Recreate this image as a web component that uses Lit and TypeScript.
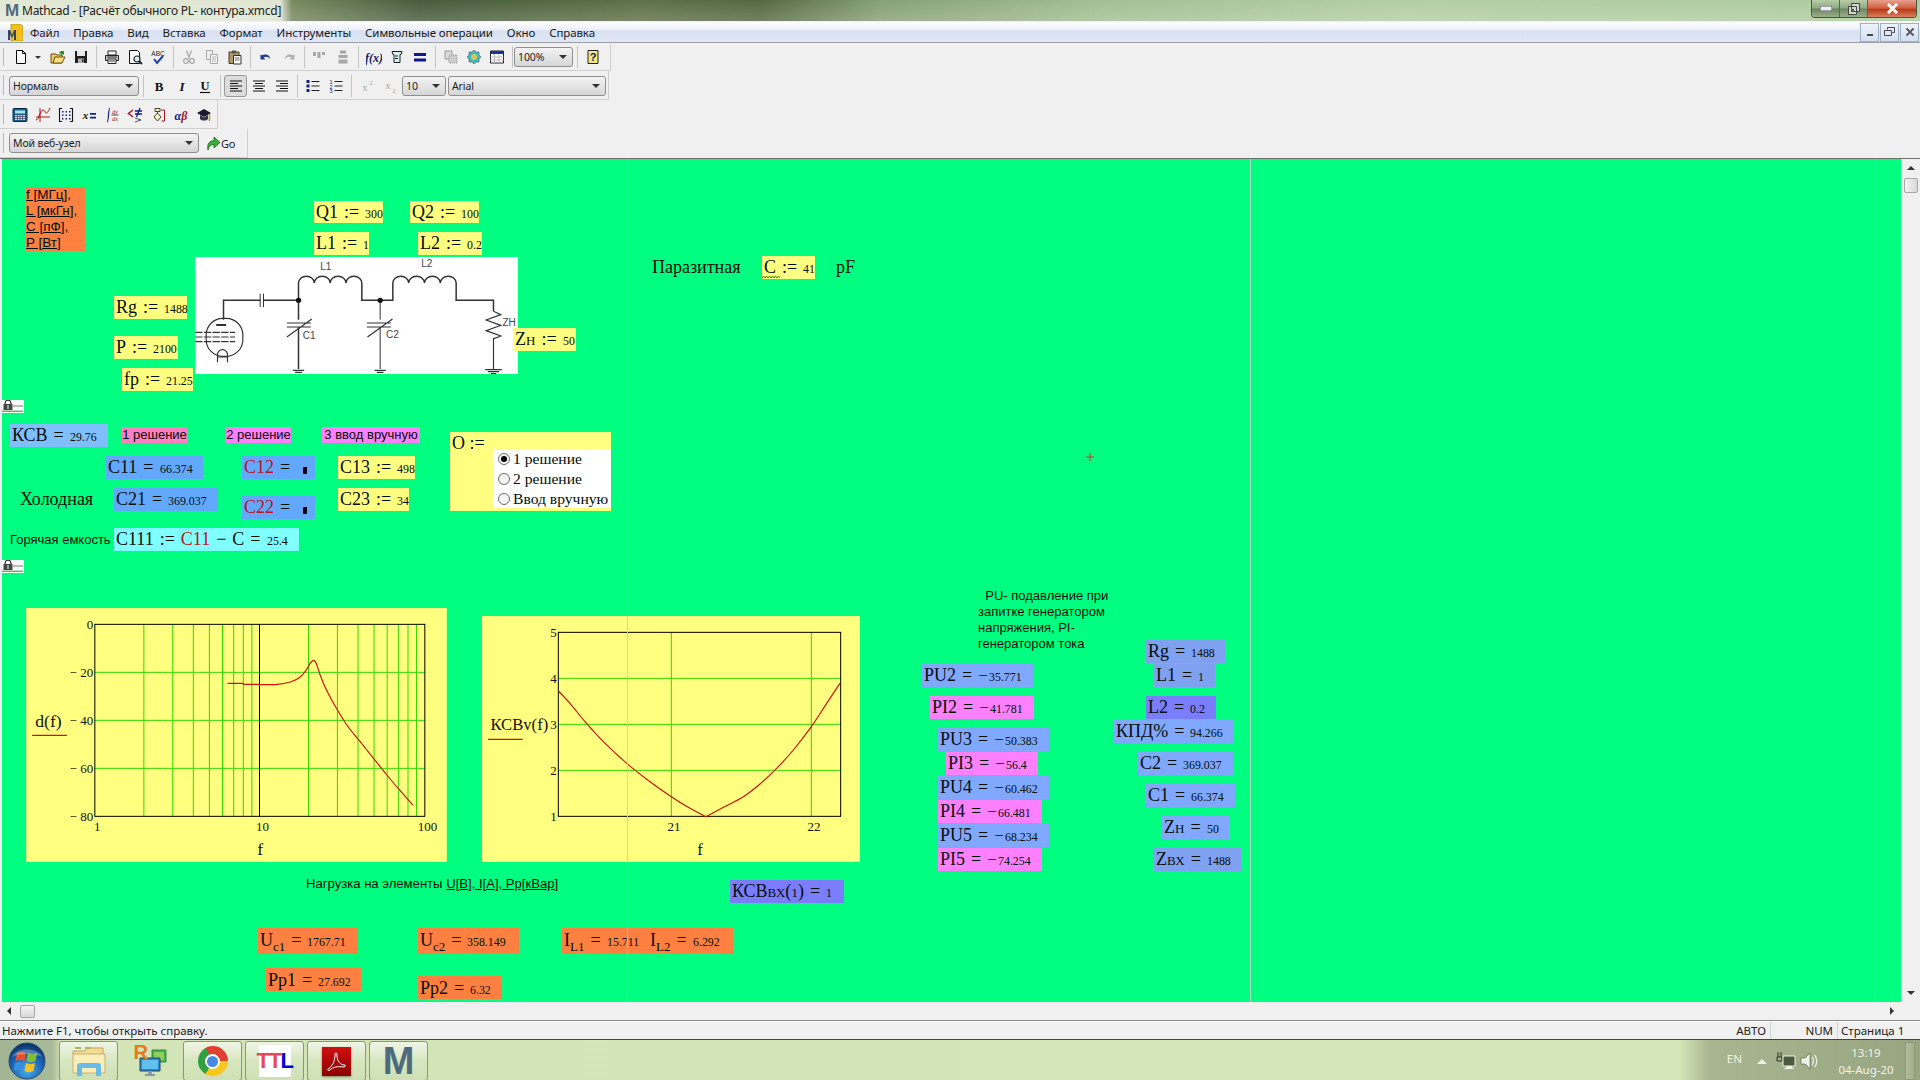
import { LitElement, html, css, svg, TemplateResult } from "lit";
import { customElement } from "lit/decorators.js";

type Btn = { k: string; w?: number; off?: boolean };

const I: Record<string, any> = {
  newdoc: svg`<path d="M3.5 1.5h6l3 3v10h-9z" fill="#fff" stroke="#000"/><path d="M9.5 1.5v3h3" fill="none" stroke="#000"/>`,
  open: svg`<path d="M1 5h5l1 1h5v8H1z" fill="#e8c860" stroke="#705010"/><path d="M3 14l2-6h10l-3 6z" fill="#f8e080" stroke="#705010"/><path d="M9 4c1-2 3-2.500 4-1.500l1-1v4h-4l1-1c-.5-.5-1.500-.5-2-.5z" fill="#209020"/>`,
  save: svg`<path d="M2 2h12v12H2z" fill="#202020"/><path d="M4 2h8v5H4z" fill="#e8e8e8"/><path d="M5 9.500h6V14H5z" fill="#b0b0b0"/><path d="M9 10.500h1.500V13H9z" fill="#222"/>`,
  print: svg`<path d="M4 2h8v4H4z" fill="#fff" stroke="#222"/><path d="M1.500 6.500h13v5h-13z" fill="#c8c8c8" stroke="#222"/><path d="M4 10h8v4.500H4z" fill="#fff" stroke="#222"/><path d="M5 12h6M3 8h10" stroke="#333"/>`,
  preview: svg`<path d="M2.500 1.500h8l2 2v11h-10z" fill="#fff" stroke="#111"/><circle cx="10" cy="10" r="3" fill="#d8f0ff" stroke="#222" stroke-width="1.200"/><path d="M12 12l3 3" stroke="#222" stroke-width="1.800"/>`,
  spell: svg`<text x="8" y="7" font-size="6.500" font-family="Liberation Sans" text-anchor="middle" fill="#222">ABC</text><path d="M4 10l3 4 6-7" fill="none" stroke="#1840b0" stroke-width="2"/>`,
  cut: svg`<path d="M5.500 1.500l3 8M10.500 1.500l-3 8" stroke="#a8a8a8" stroke-width="1.200"/><circle cx="5" cy="12" r="2.300" fill="none" stroke="#a8a8a8" stroke-width="1.200"/><circle cx="11" cy="12" r="2.300" fill="none" stroke="#a8a8a8" stroke-width="1.200"/>`,
  copy: svg`<path d="M2.500 1.500h6v9h-6z" fill="#eee" stroke="#a8a8a8"/><path d="M6.500 5.500h7v9h-7z" fill="#f4f4f4" stroke="#a8a8a8"/><path d="M8 8h4M8 10h4M8 12h4" stroke="#b8b8b8"/>`,
  paste: svg`<path d="M2 3h10v11.500H2z" fill="#b09868" stroke="#4a3a20"/><path d="M5 1.500h4v3H5z" fill="#555"/><path d="M6.500 6.500h7.500v8.500H6.500z" fill="#fff" stroke="#333"/><path d="M8 9h4.500M8 11h4.500" stroke="#666"/>`,
  undo: svg`<path d="M2.500 5.500v5h5l-2-2c2-1.500 5-1 6.500 1.500 .2-3-3-6-8-3.800z" fill="#1c3c90"/>`,
  redo: svg`<path d="M13.500 5.500v5h-5l2-2c-2-1.500-5-1-6.500 1.500-.2-3 3-6 8-3.800z" fill="#b0b0b0"/>`,
  ahoriz: svg`<path d="M1 3h3v4H1zM5.500 3h3v6h-3zM10 3h3v3h-3z" fill="#a8a8a8"/>`,
  avert: svg`<path d="M5 1.500h6v3H5zM3.500 6h9v3h-9zM3.500 10.500h9v4h-9z" fill="#a8a8a8"/>`,
  fx: svg`<text x="8" y="12.500" font-size="12" font-family="Liberation Serif" font-weight="700" font-style="italic" text-anchor="middle" fill="#102060">f(x)</text>`,
  unit: svg`<path d="M3 2.500h10l-1 3h-1v8H5v-8H4z" fill="#e0f0f0" stroke="#123"/><path d="M6 7h3M6 9.500h3" stroke="#123"/>`,
  eq: svg`<path d="M2 4h12v3H2zM2 9.500h12v3H2z" fill="#101890"/>`,
  comp1: svg`<path d="M2 2h7v8H2z" fill="#ddd" stroke="#999"/><path d="M6 6h8v8H6z" fill="#ccc" stroke="#999" stroke-dasharray="1 1"/>`,
  comp2: svg`<path d="M8 1l2 2 3 0 0 3 2 2-2 2 0 3-3 0-2 2-2-2-3 0 0-3-2-2 2-2 0-3 3 0z" fill="#40b8c8" stroke="#506060" stroke-width=".6"/><circle cx="8" cy="8" r="3" fill="#d8c850"/>`,
  table: svg`<path d="M1.500 2h13v12h-13z" fill="#fff" stroke="#223"/><path d="M1.500 2h13v3h-13z" fill="#20308c"/><path d="M5.500 5v9M10 5v9M1.500 8h13M1.500 11h13" stroke="#bbb"/>`,
  help: svg`<path d="M3 1.500h10v13H3z" fill="#f4e880" stroke="#222"/><text x="8" y="12" font-size="11" font-weight="700" font-family="Liberation Sans" text-anchor="middle" fill="#102060">?</text>`,
  bold: svg`<text x="8" y="13" font-size="13" font-weight="700" font-family="Liberation Serif" text-anchor="middle" fill="#111">B</text>`,
  ital: svg`<text x="8" y="13" font-size="13" font-weight="700" font-style="italic" font-family="Liberation Serif" text-anchor="middle" fill="#111">I</text>`,
  under: svg`<text x="8" y="12" font-size="12.500" font-weight="700" font-family="Liberation Serif" text-anchor="middle" fill="#111">U</text><path d="M3 14.500h10" stroke="#111" stroke-width="1.200"/>`,
  left: svg`<path d="M2 3h12M2 5.500h8M2 8h12M2 10.500h8M2 13h12" stroke="#111"/>`,
  center: svg`<path d="M2 3h12M4 5.500h8M2 8h12M4 10.500h8M2 13h12" stroke="#111"/>`,
  right: svg`<path d="M2 3h12M6 5.500h8M2 8h12M6 10.500h8M2 13h12" stroke="#111"/>`,
  bullets: svg`<path d="M1.500 2h3v3h-3zM1.500 6.500h3v3h-3zM1.500 11h3v3h-3z" fill="#10208c"/><path d="M6.500 3.500h8M6.500 8h8M6.500 12.500h8" stroke="#222"/>`,
  numbers: svg`<text x="3" y="5.500" font-size="5.500" font-family="Liberation Sans" text-anchor="middle" fill="#10208c">1</text><text x="3" y="10.500" font-size="5.500" font-family="Liberation Sans" text-anchor="middle" fill="#10208c">2</text><text x="3" y="15" font-size="5.500" font-family="Liberation Sans" text-anchor="middle" fill="#10208c">3</text><path d="M6.500 3.500h8M6.500 8h8M6.500 12.500h8" stroke="#222"/>`,
  sup: svg`<text x="6" y="13" font-size="10" font-family="Liberation Serif" text-anchor="middle" fill="#a8a8a8">x</text><text x="12" y="7" font-size="7" font-family="Liberation Serif" text-anchor="middle" fill="#a8a8a8">2</text>`,
  sub: svg`<text x="6" y="11" font-size="10" font-family="Liberation Serif" text-anchor="middle" fill="#a8a8a8">x</text><text x="12" y="15" font-size="7" font-family="Liberation Serif" text-anchor="middle" fill="#a8a8a8">2</text>`,
  calc: svg`<path d="M2 1.500h12a1 1 0 0 1 1 1v11a1 1 0 0 1-1 1H2a1 1 0 0 1-1-1v-11a1 1 0 0 1 1-1z" fill="#1c5c8c" stroke="#0a2c50"/><path d="M3 3.500h10v3H3z" fill="#a8e0e8"/><path d="M3 8h10v5H3z" fill="#d0d8e0"/><path d="M3 9.500h10M3 11.500h10M5.500 8v5M8 8v5M10.500 8v5" stroke="#445" stroke-width=".7"/>`,
  graph: svg`<path d="M5 1v14M1 10h14" stroke="#a00" stroke-width=".9"/><path d="M1 13c3 0 4-10 7-10s2 8 7-2" fill="none" stroke="#c00000" stroke-width="1"/>`,
  matrix: svg`<path d="M4 1.500H1.500v13H4M12 1.500h2.500v13H12" fill="none" stroke="#111" stroke-width="1.100"/><path d="M4 4h1.500v1.500H4zM7.500 4H9v1.500H7.500zM11 4h1.500v1.500H11zM4 7.500h1.500V9H4zM7.500 7.500H9V9H7.500zM11 7.500h1.500V9H11zM4 11h1.500v1.500H4zM7.500 11H9v1.500H7.500zM11 11h1.500v1.500H11z" fill="#10208c"/>`,
  xeq: svg`<text x="4.500" y="12" font-size="11" font-style="italic" font-weight="700" font-family="Liberation Serif" text-anchor="middle" fill="#111">x</text><path d="M9 6h6v1.800H9zM9 9.700h6v1.800H9z" fill="#10208c"/>`,
  calc2: svg`<path d="M3 15c2 0 1-14 3-14" fill="none" stroke="#102090" stroke-width="1.200"/><text x="11" y="7" font-size="6.500" font-style="italic" font-family="Liberation Serif" text-anchor="middle" fill="#a03010">dy</text><path d="M7.500 8h7" stroke="#111" stroke-width=".7"/><text x="11" y="14" font-size="6.500" font-style="italic" font-family="Liberation Serif" text-anchor="middle" fill="#a03010">dx</text>`,
  compare: svg`<path d="M6 3L1.500 6.500 6 10" fill="none" stroke="#a01818" stroke-width="1.500"/><path d="M8 4h7M8 7h7M13 1L9.500 10" stroke="#101890" stroke-width="1.300"/><path d="M8 11l6 2-6 2" fill="none" stroke="#555" stroke-width="1"/>`,
  prog: svg`<path d="M5 1.500h5v3H5zM7.500 4.500V6M7.500 6l3.500 4-3.500 4-3.500-4z" fill="#f8f0c0" stroke="#443"/><path d="M11 3h3.500v11h-3" fill="none" stroke="#a01818"/>`,
  greek: svg`<text x="8" y="12.500" font-size="12" font-weight="700" font-style="italic" font-family="Liberation Serif" text-anchor="middle"><tspan fill="#101890">α</tspan><tspan fill="#a01818">β</tspan></text>`,
  hat: svg`<path d="M1 6l7-4 7 4-7 4z" fill="#1a1a2c"/><path d="M4 8v4c2 2 6 2 8 0V8l-4 2.500z" fill="#33334c"/><path d="M13.500 7v7" stroke="#a8a030" stroke-width="1.500"/>`,
  go: svg`<path d="M3 15c-1-6 1-9 6-9.500V2l6 5.500-6 5.500V9.500C6 9.500 4 11 3 15z" fill="#38b038" stroke="#186018" stroke-width=".8"/>`,
};

const tb1: (Btn | string)[] = [
  { k: "newdoc" }, { k: "drop", w: 11 }, { k: "spc3", w: 3 }, { k: "open" }, { k: "save" }, "|",
  { k: "print" }, { k: "preview" }, { k: "spell" }, "|",
  { k: "cut" }, { k: "copy" }, { k: "paste" }, "|",
  { k: "undo" }, { k: "redo" }, "|",
  { k: "ahoriz" }, { k: "avert" }, "|",
  { k: "fx" }, { k: "unit" }, { k: "eq" }, "|",
  { k: "comp1" }, { k: "comp2" }, { k: "table" }, "|",
];
const tb3: string[] = ["calc", "graph", "matrix", "xeq", "calc2", "compare", "prog", "greek", "hat"];

const icon = (k: string, size = 16) =>
  html`<svg class="ic" width=${size} height=${size} viewBox="0 0 16 16">${I[k]}</svg>`;

const btn = (b: Btn | string) => {
  if (typeof b === "string") return html`<span class="sep"></span>`;
  if (b.k === "drop") return html`<span class="dropb"><i class="arr"></i></span>`;
  if (b.k === "spc3") return html`<span class="spc"></span>`;
  return html`<span class="b">${icon(b.k)}</span>`;
};

const combo = (t: string, cls: string) =>
  html`<span class="combo ${cls}"><span>${t}</span><i class="arr"></i></span>`;

const val = (n: string) =>
  n.startsWith("−")
    ? html`<span class="minus">−</span><span class="n">${n.slice(1)}</span>`
    : html`<span class="n">${n}</span>`;

const ex = (v: any, op: string, n: string, cls = "") =>
  html`<span class="v ${cls}">${v}</span><span class="op">${op}</span>${val(n)}`;

const sm = (a: string) => html`<span class="smc">${a}</span>`;
const sb = (a: string) => html`<span class="sb">${a}</span>`;

type R = [number, number, number, number, string, any];
const regions: R[] = [
  [314, 201, 383, 223, "yel", ex("Q1", ":=", "300")],
  [410, 201, 479, 223, "yel", ex("Q2", ":=", "100")],
  [314, 232, 369, 255, "yel", ex("L1", ":=", "1")],
  [418, 232, 482, 255, "yel", ex("L2", ":=", "0.2")],
  [114, 296, 187, 319, "yel", ex("Rg", ":=", "1488")],
  [114, 336, 178, 359, "yel", ex("P", ":=", "2100")],
  [122, 368, 193, 391, "yel", ex("fp", ":=", "21.25")],
  [513, 328, 576, 351, "yel", ex(html`Z${sm("Н")}`, ":=", "50")],
  [762, 256, 815, 279, "yel", html`${ex("C", ":=", "41")}<svg class="wave" width="18" height="4" viewBox="0 0 18 4"><path d="M0 3l1.500-2 1.500 2 1.500-2 1.500 2 1.500-2 1.500 2 1.500-2 1.500 2 1.500-2 1.500 2 1.500-2 1.500 2" fill="none" stroke="#2c8000" stroke-width=".9"/></svg>`],
  [10, 424, 108, 447, "lb", ex("КСВ", "=", "29.76")],
  [106, 456, 203, 479, "b1", ex("C11", "=", "66.374")],
  [242, 456, 315, 479, "b1", html`<span class="v red">C12</span><span class="op">=</span><span class="blk"></span>`],
  [338, 456, 415, 479, "yel", ex("C13", ":=", "498")],
  [114, 488, 218, 511, "b1", ex("C21", "=", "369.037")],
  [242, 496, 315, 519, "b1", html`<span class="v red">C22</span><span class="op">=</span><span class="blk"></span>`],
  [338, 488, 409, 511, "yel", ex("C23", ":=", "34")],
  [114, 528, 299, 551, "cy", html`<span class="v">C111</span><span class="op">:=</span><span class="v red">C11</span><span class="op">−</span><span class="v">C</span><span class="op">=</span>${val("25.4")}`],
  [922, 664, 1033, 687, "b2", ex("PU2", "=", "−35.771")],
  [930, 696, 1034, 719, "pk", ex("PI2", "=", "−41.781")],
  [938, 728, 1049, 751, "b2", ex("PU3", "=", "−50.383")],
  [946, 752, 1038, 775, "pk", ex("PI3", "=", "−56.4")],
  [938, 776, 1049, 799, "b2", ex("PU4", "=", "−60.462")],
  [938, 800, 1042, 823, "pk", ex("PI4", "=", "−66.481")],
  [938, 824, 1049, 847, "b2", ex("PU5", "=", "−68.234")],
  [938, 848, 1042, 871, "pk", ex("PI5", "=", "−74.254")],
  [1146, 640, 1225, 663, "b3", ex("Rg", "=", "1488")],
  [1154, 664, 1215, 687, "b3", ex("L1", "=", "1")],
  [1146, 696, 1216, 719, "vi", ex("L2", "=", "0.2")],
  [1114, 720, 1234, 743, "b2", ex("КПД%", "=", "94.266")],
  [1138, 752, 1233, 775, "b2", ex("C2", "=", "369.037")],
  [1146, 784, 1235, 807, "b2", ex("C1", "=", "66.374")],
  [1162, 816, 1230, 839, "b2", ex(html`Z${sm("Н")}`, "=", "50")],
  [1154, 848, 1241, 871, "b3", ex(html`Z${sm("ВХ")}`, "=", "1488")],
  [730, 880, 844, 903, "vi", html`<span class="v">КСВ${sm("ВХ")}(<span class="par">1</span>)</span><span class="op">=</span>${val("1")}`],
  [258, 928, 358, 954, "or", ex(html`U${sb("c1")}`, "=", "1767.71")],
  [418, 928, 519, 954, "or", ex(html`U${sb("c2")}`, "=", "358.149")],
  [562, 928, 648, 954, "or", ex(html`I${sb("L1")}`, "=", "15.711")],
  [648, 928, 733, 954, "or", ex(html`I${sb("L2")}`, "=", "6.292")],
  [266, 968, 362, 991, "or", ex("Pp1", "=", "27.692")],
  [418, 976, 502, 999, "or", ex("Pp2", "=", "6.32")],
];

/* Catmull-Rom through measured curve points */
const smooth = (p: number[][]) => {
  let d = `M${p[0][0]} ${p[0][1]}`;
  for (let i = 0; i < p.length - 1; i++) {
    const a = p[Math.max(0, i - 1)], b = p[i], c = p[i + 1], e = p[Math.min(p.length - 1, i + 2)];
    const c1 = [b[0] + (c[0] - a[0]) / 6, b[1] + (c[1] - a[1]) / 6];
    const c2 = [c[0] - (e[0] - b[0]) / 6, c[1] - (e[1] - b[1]) / 6];
    d += `C${c1[0]} ${c1[1]} ${c2[0]} ${c2[1]} ${c[0]} ${c[1]}`;
  }
  return d;
};

const vg1 = [2, 3, 4, 5, 6, 7, 8, 9, 20, 30, 40, 50, 60, 70, 80, 90];
const px1 = (f: number) => 284 + 494 * Math.log10(f) - 2 * Math.sin(Math.PI * (Math.log10(f) % 1));

const c1 = smooth([[780, 254], [832, 253], [870, 246], [895, 235], [915, 215], [930, 190], [940, 181], [948, 190], [960, 225], [975, 262], [1000, 310], [1040, 375], [1080, 425], [1120, 475], [1160, 525], [1200, 572], [1238, 615]]);
const c2a = smooth([[265, 273], [300, 310], [345, 365], [400, 425], [470, 490], [540, 545], [604, 590], [660, 625], [708, 650]]);
const c2b = smooth([[708, 650], [760, 622], [820, 590], [870, 552], [920, 505], [970, 450], [1024, 380], [1070, 310], [1110, 250]]);

const plot1 = svg`
  <rect x="78" y="24" width="1262" height="762" fill="#ffff80"/>
  ${vg1.map((f) => svg`<path d="M${px1(f)} 73V649" stroke="#30d800" stroke-width="3"/>`)}
  ${[217, 361, 505].map((y) => svg`<path d="M284 ${y}H1274" stroke="#30d800" stroke-width="3"/>`)}
  <path d="M778 73V649" stroke="#000" stroke-width="3"/>
  <rect x="284" y="73" width="990" height="576" fill="none" stroke="#000" stroke-width="3"/>
  <path d="M682 250H728L730 253H780" fill="none" stroke="#c81400" stroke-width="3.500"/>
  <path d=${c1} fill="none" stroke="#c81400" stroke-width="3.500"/>
  <g class="pl" font-size="39">
    <text x="279" y="88" text-anchor="end">0</text>
    <text x="279" y="232" text-anchor="end">− 20</text>
    <text x="279" y="376" text-anchor="end">− 40</text>
    <text x="279" y="520" text-anchor="end">− 60</text>
    <text x="279" y="664" text-anchor="end">− 80</text>
    <text x="291" y="692" text-anchor="middle">1</text>
    <text x="787" y="692" text-anchor="middle">10</text>
    <text x="1282" y="692" text-anchor="middle">100</text>
  </g>
  <g class="pl" font-size="53">
    <text x="780" y="766" text-anchor="middle">f</text>
    <text x="145" y="380" text-anchor="middle">d(f)</text>
  </g>
  <path d="M96 406H200" stroke="#c81400" stroke-width="3.500"/>
`;

const plot2 = svg`
  <rect x="36" y="48" width="1134" height="738" fill="#ffff80"/>
  ${[604, 1024].map((x) => svg`<path d="M${x} 97V649" stroke="#30d800" stroke-width="3"/>`)}
  ${[235, 373, 511].map((y) => svg`<path d="M265 ${y}H1112" stroke="#30d800" stroke-width="3"/>`)}
  <rect x="265" y="97" width="847" height="552" fill="none" stroke="#000" stroke-width="3"/>
  <path d=${c2a} fill="none" stroke="#c81400" stroke-width="3.500"/>
  <path d=${c2b} fill="none" stroke="#c81400" stroke-width="3.500"/>
  <g class="pl" font-size="39">
    <text x="260" y="112" text-anchor="end">5</text>
    <text x="260" y="250" text-anchor="end">4</text>
    <text x="260" y="388" text-anchor="end">3</text>
    <text x="260" y="526" text-anchor="end">2</text>
    <text x="260" y="664" text-anchor="end">1</text>
    <text x="612" y="692" text-anchor="middle">21</text>
    <text x="1032" y="692" text-anchor="middle">22</text>
  </g>
  <g class="pl" font-size="50">
    <text x="690" y="766" text-anchor="middle">f</text>
    <text x="148" y="390" text-anchor="middle">КСВv(f)</text>
  </g>
  <path d="M54 418H158" stroke="#c81400" stroke-width="3.500"/>
`;

const coil = " a23.75 20 0 0 1 47.5 0 a23.75 20 0 0 1 47.5 0 a23.75 20 0 0 1 47.5 0 a23.75 20 0 0 1 47.5 0";

const schem = svg`
  <rect x="45" y="52" width="968" height="351" fill="#fff"/>
  <g fill="none" stroke="#333">
    <path d="M130 240V182H240M250 182H355V130" stroke-width="4.500"/>
    <path d="M240 162V202M250 162V202" stroke-width="3"/>
    <path d="M355 130${coil}V182H600" stroke-width="4.500"/>
    <path d="M600 182H638V130${coil}V182H940V215" stroke-width="4.500"/>
    <path d="M940 215l22 10-44 16 44 16-44 16 44 16-22 8V388" stroke-width="3.500"/>
    <path d="M355 182V240M355 262V388" stroke-width="4.500"/>
    <path d="M600 182V240M600 262V388" stroke-width="3"/>
    <path d="M320 250H392M320 262H392M320 292L395 238M560 250H632M560 262H632M562 292L637 238" stroke-width="3.500"/>
    <rect x="78" y="236" width="110" height="114" rx="50" stroke-width="3.500"/>
    <path d="M108 256H138" stroke-width="6"/>
    <path d="M45 278H165M45 292H165M45 306H165" stroke-width="3.500" stroke-dasharray="22 4"/>
    <path d="M112 368V345a15 15 0 0 1 30 0V368M112 352H142" stroke-width="3.500"/>
    <path d="M338 392H372M345 398H365M583 392H617M590 398H610M915 390H965M923 396H957M932 402H948" stroke-width="3.500"/>
  </g>
  <g fill="#111"><circle cx="355" cy="182" r="8"/><circle cx="600" cy="182" r="8"/></g>
  <g class="sc" font-size="30" fill="#444">
    <text x="437" y="92" text-anchor="middle">L1</text>
    <text x="740" y="83" text-anchor="middle">L2</text>
    <text x="387" y="299" text-anchor="middle">C1</text>
    <text x="637" y="296" text-anchor="middle">C2</text>
    <text x="987" y="259" text-anchor="middle">ZН</text>
  </g>
`;

const lock = html`<svg class="lock" width="22" height="13" viewBox="0 0 22 13">
  <rect width="22" height="13" fill="#fff"/>
  <path d="M3 4V3a3 3 0 0 1 6 0v1" fill="none" stroke="#000"/>
  <rect x="1.500" y="4" width="9" height="6" fill="#444"/>
  <path d="M5 6h2M5 8h2" stroke="#fff"/>
  <path d="M11 6h10" stroke="#777"/>
  <path d="M0 12l1-1.500 1 1.500 1-1.500 1 1.500 1-1.500 1 1.500 1-1.500 1 1.500 1-1.500 1 1.500 1-1.500 1 1.500 1-1.500 1 1.500 1-1.500 1 1.500 1-1.500 1 1.500 1-1.500 1 1.500 1-1.500" fill="none" stroke="#3a8a3a" stroke-width=".8"/>
</svg>`;

const SHEET_X = 2;
const SHEET_Y = 159;

@customElement("app-root")
export class AppRoot extends LitElement {
  static styles = css`
    :host {
      display: flex;
      flex-direction: column;
      width: 1920px;
      height: 1080px;
      overflow: hidden;
      background: #f0f0f0;
      font-family: "Noto Sans", sans-serif;
      color: #000;
    }
    .title {
      height: 21px;
      flex: none;
      display: flex;
      align-items: center;
      background:
        linear-gradient(180deg, rgba(255, 255, 255, 0.06), rgba(255, 255, 255, 0.22)),
        linear-gradient(90deg, #dfe6d2 0, #dde4cf 280px, #6f8256 292px, #3b5230 420px, #54683c 640px, #4a5f36 760px, #7f9a6c 880px, #9dbb8d 1100px, #aecb9f 1400px, #a9c89a 1813px);
      font-size: 12px;
      letter-spacing: -0.25px;
      color: #222;
      padding-right: 3px;
    }
    .logo {
      width: 20px;
      height: 18px;
      margin-left: 2px;
      font: 700 17px/18px "Liberation Sans", sans-serif;
      color: #506a80;
      text-align: center;
    }
    .tt {
      margin-left: 0;
      flex: 1;
    }
    .wb {
      display: flex;
      align-self: flex-start;
      height: 17px;
      border: 1px solid #4a5640;
      border-top: 0;
      border-radius: 0 0 4px 4px;
      overflow: hidden;
      margin-right: 0;
    }
    .wb span {
      display: flex;
      align-items: center;
      justify-content: center;
      width: 27px;
      background: linear-gradient(180deg, #b7cda8, #8ea880 48%, #6d8460 52%, #9ab08c);
      border-right: 1px solid #5a6850;
    }
    .wb .cl {
      width: 48px;
      border: 0;
      background: linear-gradient(180deg, #e8a090, #d06040 48%, #b83818 55%, #d88060);
    }
    .menu {
      height: 21px;
      flex: none;
      margin-top: 1px;
      display: flex;
      align-items: center;
      gap: 14px;
      background: linear-gradient(180deg, #fdfdff 0, #eef2fa 35%, #d9e1f1 45%, #dfe6f4 100%);
      border-bottom: 1px solid #9aa0a6;
      font-size: 11.5px;
      letter-spacing: -0.1px;
      color: #1a1a1a;
      box-sizing: border-box;
      position: relative;
    }
    .mi {
      width: 15px;
      height: 17px;
      margin-left: 8px;
      margin-right: -7px;
    }
    .mdi {
      margin-left: auto;
      display: flex;
      gap: 1px;
      margin-right: 1px;
    }
    .mdi span {
      width: 17px;
      height: 17px;
      border: 1px solid #9fb0c4;
      background: linear-gradient(180deg, #eef3fb, #d3dff0);
      display: flex;
      align-items: center;
      justify-content: center;
    }
    .bars {
      height: 116px;
      flex: none;
      display: flex;
      flex-direction: column;
      padding-top: 1px;
      box-sizing: border-box;
      border-bottom: 1px solid #6f6f6f;
    }
    .tb {
      display: flex;
      align-items: center;
      height: 29px;
      box-sizing: border-box;
      flex: none;
      padding-left: 10px;
      border-bottom: 1px solid #cfcfcf;
      border-right: 1px solid #cfcfcf;
      position: relative;
    }
    .tb::before {
      content: "";
      position: absolute;
      left: 3px;
      top: 4px;
      bottom: 4px;
      width: 1px;
      background: #b8b8b8;
    }
    .t1 { width: 611px; height: 27px; padding-left: 9px; }
    .t2 { width: 609px; padding-left: 9px; padding-top: 1px; }
    .t3 { width: 218px; padding-left: 8px; padding-top: 1px; }
    .t4 { width: 248px; padding-left: 9px; }
    .b {
      width: 23px;
      height: 22px;
      flex: none;
      display: flex;
      align-items: center;
      justify-content: center;
    }
    .ic { display: block; }
    .spc { width: 3px; flex: none; }
    .dropb {
      width: 11px;
      flex: none;
      display: flex;
      justify-content: center;
    }
    .arr {
      display: block;
      width: 0;
      height: 0;
      border-left: 4px solid transparent;
      border-right: 4px solid transparent;
      border-top: 4px solid #333;
    }
    .dropb .arr {
      border-left-width: 3px;
      border-right-width: 3px;
      border-top-width: 3px;
    }
    .sep {
      width: 1px;
      height: 22px;
      flex: none;
      background: #c4c4c4;
      margin: 0 3.500px;
    }
    .combo {
      box-sizing: border-box;
      display: flex;
      align-items: center;
      justify-content: space-between;
      height: 20px;
      flex: none;
      padding: 0 5px 0 3px;
      border: 1px solid #8e8f8f;
      border-radius: 3px;
      background: linear-gradient(180deg, #f4f4f4, #e4e4e4 50%, #d6d6d6);
      font-size: 10.500px;
      letter-spacing: -0.1px;
      color: #222;
    }
    .c130 { width: 130px; }
    .c59 { width: 59px; margin-left: -2px; }
    .c44 { width: 44px; margin-left: 1px; }
    .c158 { width: 158px; margin-left: 2px; }
    .c190 { width: 190px; }
    .act {
      background: #dcdcdc;
      border: 1px solid #9a9a9a;
      border-radius: 3px;
      box-sizing: border-box;
    }
    .go {
      margin-left: 6px;
      display: flex;
      align-items: center;
      font-size: 11px;
      letter-spacing: -0.3px;
      color: #222;
    }
    .row {
      flex: none;
      height: 843px;
      display: flex;
      background: #f0f0f0;
    }
    .sheet {
      position: relative;
      width: 1899px;
      margin-left: 2px;
      background: #00ff80;
      overflow: hidden;
      font-family: "Liberation Serif", serif;
      color: #001008;
    }
    .edge {
      width: 2px;
      flex: none;
      margin-left: -2px;
      background: #7d8b88;
    }
    .vs {
      width: 19px;
      flex: none;
      position: relative;
      background: #f0f0f0;
      display: flex;
      flex-direction: column;
      align-items: center;
    }
    .thumb {
      box-sizing: border-box;
      border: 1px solid #a8a8a8;
      border-radius: 2px;
      background: linear-gradient(90deg, #f4f4f4, #d8d8d8);
    }
    .vs .thumb { width: 14px; height: 15px; margin-top: 8px; }
    .up {
      margin-top: 7px;
      width: 0;
      height: 0;
      border-left: 4px solid transparent;
      border-right: 4px solid transparent;
      border-bottom: 4px solid #333;
    }
    .dn {
      margin-top: auto;
      margin-bottom: 7px;
      width: 0;
      height: 0;
      border-left: 4px solid transparent;
      border-right: 4px solid transparent;
      border-top: 4px solid #333;
    }
    .hs {
      flex: none;
      height: 19px;
      display: flex;
      align-items: center;
      background: #f0f0f0;
      padding: 0 26px 0 7px;
      border-bottom: 1px solid #8a8a8a;
      box-sizing: border-box;
    }
    .hs .thumb { width: 15px; height: 13px; margin-left: 9px; background: linear-gradient(180deg, #f4f4f4, #d8d8d8); }
    .lf {
      width: 0;
      height: 0;
      border-top: 4px solid transparent;
      border-bottom: 4px solid transparent;
      border-right: 4px solid #333;
    }
    .rt {
      margin-left: auto;
      width: 0;
      height: 0;
      border-top: 4px solid transparent;
      border-bottom: 4px solid transparent;
      border-left: 4px solid #333;
    }
    .status {
      flex: none;
      height: 19px;
      display: flex;
      align-items: center;
      font-size: 11.500px;
      color: #222;
      padding-left: 2px;
      border-bottom: 1px solid #444;
      box-sizing: border-box;
      border-top: 1px solid #fff;
      background: #f0f0f0;
    }
    .status .pane {
      box-sizing: border-box;
      height: 100%;
      display: flex;
      align-items: center;
      justify-content: flex-end;
      border-right: 1px solid #d4d4d4;
      padding-right: 4px;
    }
    .p1 { margin-left: auto; }
    .p2 { width: 67px; }
    .p3 { width: 78px; margin-right: 4px; border-right: 0 !important; padding-left: 3px; justify-content: flex-start !important; }
    .task {
      flex: 1;
      display: flex;
      align-items: stretch;
      background: linear-gradient(90deg, #a3b494 0, #a9ba98 52px, #d3e4b6 62px, #d4e5b8 1680px, #a7b590 1710px, #97a581 1920px);
      position: relative;
    }
    .orb {
      width: 59px;
      flex: none;
      display: flex;
      align-items: center;
      justify-content: center;
      padding-right: 5px;
      box-sizing: border-box;
    }
    .tasks {
      display: flex;
      gap: 3px;
      align-items: stretch;
    }
    .tk {
      width: 59px;
      box-sizing: border-box;
      display: flex;
      align-items: center;
      justify-content: center;
      border: 1px solid #8a9878;
      border-radius: 3px;
      background: linear-gradient(180deg, #f0f5e6, #d6e6bf 50%, #cfe0b5);
      margin-top: 1px;
    }
    .tk.pl0 {
      border-color: transparent;
      background: none;
    }
    .chrome {
      width: 30px;
      height: 30px;
      border-radius: 50%;
      background: conic-gradient(#e04030 0 90deg, #f8c820 90deg 210deg, #30a040 210deg 330deg, #e04030 330deg);
      display: flex;
      align-items: center;
      justify-content: center;
    }
    .chrome i {
      display: block;
      width: 15px;
      height: 15px;
      box-sizing: border-box;
      border-radius: 50%;
      border: 2.500px solid #fff;
      background: #4a88e0;
    }
    .ttl {
      width: 32px;
      height: 32px;
      background: #fff;
      display: flex;
      align-items: center;
      justify-content: center;
      font: 700 22px/32px "Liberation Sans", sans-serif;
      letter-spacing: -1.500px;
      color: #e84858;
    }
    .ttl b { color: #0000e0; }
    .adobe {
      width: 29px;
      height: 29px;
      background: linear-gradient(180deg, #d01010, #8c0000);
      box-shadow: 0 1px 2px rgba(0, 0, 0, 0.4);
    }
    .emm {
      font: 700 38px/38px "Liberation Sans", sans-serif;
      color: #4f6a7e;
    }
    .rd {
      position: relative;
      width: 34px;
      height: 34px;
    }
    .rd b {
      position: absolute;
      left: 0;
      top: -2px;
      font: 700 20px/20px "Liberation Sans", sans-serif;
      color: #e87818;
    }
    .tray {
      margin-left: auto;
      display: flex;
      align-items: center;
      color: #f0f4e8;
      position: relative;
    }
    .en {
      font-size: 11.500px;
      margin-right: 15px;
      margin-top: -5px;
    }
    .clock {
      font-size: 11.500px;
      text-align: center;
      line-height: 17px;
      width: 62px;
      margin-left: 16px;
      margin-top: 0;
    }
    .shd {
      width: 8px;
      height: 36px;
      margin: 0 5px 0 8px;
      border: 1px solid #8c9a78;
      background: linear-gradient(90deg, #b0bea0, #a0ae8c);
      border-radius: 1px;
    }
    .tr-up {
      width: 0;
      height: 0;
      border-left: 5px solid transparent;
      border-right: 5px solid transparent;
      border-bottom: 5px solid #eef2e6;
      margin-right: 9px;
      margin-top: 2px;
    }
    .spk { margin-left: 3px; }

    /* worksheet regions */
    .region {
      position: absolute;
      box-sizing: border-box;
      display: flex;
      align-items: baseline;
      padding-left: 2px;
      white-space: nowrap;
      font-size: 18px;
      line-height: 22px;
      overflow: visible;
    }
    .v { font-size: 18px; }
    .op { font-size: 18px; margin: 0 6px; }
    .n {
      display: inline-block;
      font-size: 13.500px;
      transform: scaleX(0.88);
      transform-origin: left center;
    }
    .par { font-size: 13.500px; }
    .minus { font-size: 17px; margin-right: 1px; }
    .red { color: #b8141c; }
    .smc { font-size: 13px; }
    .sb { font-size: 13px; position: relative; top: 5px; }
    .blk {
      display: block;
      width: 4px;
      height: 7px;
      background: #000;
      align-self: flex-end;
      margin: 0 0 5px 7px;
    }
    .wave { position: absolute; left: 0; bottom: 0; }
    .yel { background: #ffff80; }
    .lb { background: #80bfff; }
    .b1 { background: #62a8ff; }
    .b2 { background: #80a8ff; }
    .b3 { background: #80a0f0; }
    .vi { background: #7c7cff; }
    .cy { background: #80ffff; }
    .pk { background: #ff80ff; }
    .or { background: #ff8040; align-items: baseline; line-height: 25px; }
    .txt {
      position: absolute;
      white-space: nowrap;
    }
    .ar {
      font-family: "Liberation Sans", sans-serif;
      font-size: 13px;
      line-height: 16px;
    }
    .wide { font-size: 13.100px; padding: 0 3px 2px 0; }
    .note {
      background: #ff8040;
      line-height: 16px;
      text-decoration: underline;
      font-size: 13.500px;
      box-sizing: border-box;
    }
    .sol {
      display: flex;
      align-items: center;
      justify-content: center;
      height: 16px;
      font-size: 13px;
    }
    .c1s { background: #ff80c0; }
    .c2s { background: #ff80ff; }
    .tn { font-size: 18px; line-height: 22px; }
    .ul { text-decoration: underline; }
    .opt {
      position: absolute;
      box-sizing: border-box;
      background: #ffff80;
      padding: 0 0 0 2px;
      display: flex;
      font-size: 18px;
      line-height: 22px;
    }
    .opts {
      position: absolute;
      right: 0;
      top: 17px;
      width: 118px;
      height: 59px;
      background: #fff;
      font-size: 15.600px;
      line-height: 20px;
      white-space: nowrap;
    }
    .opts div {
      display: flex;
      align-items: center;
      height: 20px;
    }
    .rad {
      width: 12px;
      height: 12px;
      margin: 0 3px 0 5px;
      box-sizing: border-box;
      border: 1px solid #707070;
      border-radius: 50%;
      background: #f4f4f4;
      display: flex;
      align-items: center;
      justify-content: center;
      flex: none;
    }
    .rad i {
      display: block;
      width: 6px;
      height: 6px;
      border-radius: 50%;
      background: #000;
    }
    .lock { position: absolute; left: 0; display: block; }
    .img, .plot { position: absolute; display: block; }
    .pl text, text.pl { font-family: "Liberation Serif", serif; fill: #111; }
    .sc text { font-family: "Liberation Sans", sans-serif; }
    .vl {
      position: absolute;
      top: 0;
      bottom: 0;
      width: 1px;
      background: rgba(205, 205, 205, 0.85);
      z-index: 5;
    }
    .cross { position: absolute; z-index: 5; display: block; }
  `;

  private pos(x0: number, y0: number, x1?: number, y1?: number) {
    const a = `left:${x0 - SHEET_X}px;top:${y0 - SHEET_Y}px;`;
    return x1 === undefined ? a : `${a}width:${x1 - x0}px;height:${(y1 as number) - y0}px;`;
  }

  render(): TemplateResult {
    const menu = ["Файл", "Правка", "Вид", "Вставка", "Формат", "Инструменты", "Символьные операции", "Окно", "Справка"];
    return html`
      <div class="title">
        <span class="logo">M</span>
        <span class="tt">Mathcad - [Расчёт обычного PL- контура.xmcd]</span>
        <span class="wb">
          <span><svg width="12" height="5"><rect width="12" height="5" rx="1" fill="#eef" stroke="#555"/></svg></span>
          <span><svg width="12" height="12" viewBox="0 0 12 12"><path d="M3.500 .5h8v8h-8zM.5 3.500h8v8h-8z" fill="#cfd8c8" stroke="#444"/><path d="M3 6h3v3H3z" fill="#555"/></svg></span>
          <span class="cl"><svg width="13" height="11" viewBox="0 0 13 11"><path d="M2 1l9 9M11 1l-9 9" stroke="#fff" stroke-width="3"/></svg></span>
        </span>
      </div>
      <div class="menu">
        <svg class="mi" viewBox="0 0 15 17"><path d="M3 0h9l3 3v14H3z" fill="#f4c020" stroke="#a08010" stroke-width=".6"/><path d="M0 16V6h2l2 5 2-5h2v10H6v-6l-2 4-2-4v6z" fill="#304858"/></svg>
        ${menu.map((m) => html`<span>${m}</span>`)}
        <span class="mdi">
          <span><svg width="10" height="10"><path d="M2 8h6" stroke="#445" stroke-width="2"/></svg></span>
          <span><svg width="11" height="10" viewBox="0 0 11 10"><path d="M3.500 2.500V.5h7v5h-2M.5 3.500h7v5h-7z" fill="none" stroke="#445"/></svg></span>
          <span><svg width="10" height="10"><path d="M1.500 1.500l7 7M8.500 1.500l-7 7" stroke="#556" stroke-width="1.800"/></svg></span>
        </span>
      </div>
      <div class="bars">
        <div class="tb t1">
          ${tb1.map(btn)}
          ${combo("100%", "c59")}
          <span class="sep"></span>
          <span class="b">${icon("help")}</span>
        </div>
        <div class="tb t2">
          ${combo("Нормаль", "c130")}
          <span class="sep"></span>
          <span class="b">${icon("bold")}</span>
          <span class="b">${icon("ital")}</span>
          <span class="b">${icon("under")}</span>
          <span class="sep"></span>
          <span class="b act">${icon("left")}</span>
          <span class="b">${icon("center")}</span>
          <span class="b">${icon("right")}</span>
          <span class="sep"></span>
          <span class="b">${icon("bullets")}</span>
          <span class="b">${icon("numbers")}</span>
          <span class="sep"></span>
          <span class="b">${icon("sup")}</span>
          <span class="b">${icon("sub")}</span>
          ${combo("10", "c44")}
          ${combo("Arial", "c158")}
        </div>
        <div class="tb t3">
          ${tb3.map((k) => html`<span class="b">${icon(k)}</span>`)}
        </div>
        <div class="tb t4">
          ${combo("Мой веб-узел", "c190")}
          <span class="go">${icon("go")}Go</span>
        </div>
      </div>
      <div class="row">
        <span class="edge"></span>
        <div class="sheet">
          <div class="txt ar note" style=${this.pos(26, 187, 85, 251)}>f [МГц],<br />L [мкГн],<br />C [пФ],<br />P [Вт]</div>
          <svg class="img" style=${this.pos(195, 257, 518, 374)} viewBox="45 52 968 351">${schem}</svg>
          ${regions.map(
            ([x0, y0, x1, y1, c, body]) =>
              html`<div class="region ${c}" style=${this.pos(x0, y0, x1, y1)}>${body}</div>`
          )}
          <div class="txt tn" style=${this.pos(652, 256)}>Паразитная</div>
          <div class="txt tn" style=${this.pos(836, 256)}>pF</div>
          <div class="txt tn" style=${this.pos(20, 488)}>Холодная</div>
          ${[400, 560].map((y) => html`<span style=${this.pos(2, y)} class="lock">${lock}</span>`)}
          <div class="txt ar sol c1s" style=${this.pos(122, 427, 187, 443)}>1 решение</div>
          <div class="txt ar sol c2s" style=${this.pos(226, 427, 291, 443)}>2 решение</div>
          <div class="txt ar sol c2s" style=${this.pos(322, 427, 420, 443)}>3 ввод вручную</div>
          <div class="opt" style=${this.pos(450, 432, 611, 511)}>
            O :=
            <div class="opts">
              <div><span class="rad"><i></i></span>1 решение</div>
              <div><span class="rad"></span>2 решение</div>
              <div><span class="rad"></span>Ввод вручную</div>
            </div>
          </div>
          <div class="txt ar" style=${this.pos(10, 532)}>Горячая емкость</div>
          <svg class="plot" style=${this.pos(26, 608, 447, 862)} viewBox="78 24 1262 762">${plot1}</svg>
          <svg class="plot" style=${this.pos(482, 616, 860, 862)} viewBox="36 48 1134 738">${plot2}</svg>
          <div class="txt ar" style=${this.pos(978, 588)}>&nbsp;&nbsp;PU- подавление при<br />запитке генератором<br />напряжения, PI-<br />генератором тока</div>
          <div class="txt ar wide" style=${this.pos(306, 876)}>Нагрузка на элементы <span class="ul">U[В], I[А], Рр[кВар]</span></div>
          <svg class="cross" style=${this.pos(1085, 452, 1095, 462)} viewBox="0 0 10 10"><path d="M5 1v8M1 5h8" stroke="#e03030"/></svg>
          ${[627, 1250, 1875].map((x) => html`<span class="vl" style=${this.pos(x, SHEET_Y)}></span>`)}
        </div>
        <div class="vs"><i class="up"></i><span class="thumb"></span><i class="dn"></i></div>
      </div>
      <div class="hs"><i class="lf"></i><span class="thumb"></span><i class="rt"></i></div>
      <div class="status">
        <span>Нажмите F1, чтобы открыть справку.</span>
        <span class="pane p1">АВТО</span>
        <span class="pane p2">NUM</span>
        <span class="pane p3">Страница 1</span>
      </div>
      <div class="task">
        <span class="orb">
          <svg width="38" height="38" viewBox="0 0 38 38">
            <defs><radialGradient id="o" cx=".5" cy=".75" r=".75"><stop offset="0" stop-color="#48b0f0"/><stop offset=".6" stop-color="#1860b0"/><stop offset="1" stop-color="#0c2c60"/></radialGradient></defs>
            <circle cx="19" cy="19" r="18" fill="url(#o)" stroke="#2c4c6c"/>
            <path d="M9 11c3-1.500 6-1.500 9 0l-1.500 8c-3-1.500-6-1.500-9 0z" fill="#e8502c"/>
            <path d="M20 11c3 1.500 6 1.500 9 0l-1.500 8c-3 1.500-6 1.500-9 0z" fill="#80c030"/>
            <path d="M7 21c3-1.500 6-1.500 9 0l-1.500 8c-3-1.500-6-1.500-9 0z" fill="#3890e0"/>
            <path d="M18 21c3 1.500 6 1.500 9 0l-1.500 8c-3 1.500-6 1.500-9 0z" fill="#f8c020"/>
            <path d="M4 15C8 5 30 5 34 15 26 11 12 11 4 15z" fill="#fff" opacity=".25"/>
          </svg>
        </span>
        <span class="tasks">
          <span class="tk">
            <svg width="34" height="32" viewBox="0 0 34 32"><path d="M1 6h12l2-3h16v7H1z" fill="#f4dc90" stroke="#c0a868"/><path d="M3 3h6M13 3h6" stroke="#a8b868" stroke-width="2"/><path d="M1 9h32v19H1z" fill="#fbeeb8" stroke="#c8b070"/><path d="M5 31V21a3 3 0 0 1 3-3h18a3 3 0 0 1 3 3v10h-5v-8H10v8z" fill="#68bce8"/></svg>
          </span>
          <span class="tk pl0">
            <span class="rd"><b>R</b>
              <svg width="34" height="34" viewBox="0 0 34 34"><path d="M18 6h14v12H18z" fill="#50b030" stroke="#386"/><path d="M20 8h10v8H20z" fill="#90d060"/><path d="M6 14h20v13H6z" fill="#2888d0" stroke="#345"/><path d="M8 16h16v9H8z" fill="#60c0f0"/><path d="M14 27h4v3h-4zM11 30h10v2H11z" fill="#8898a8"/></svg>
            </span>
          </span>
          <span class="tk"><span class="chrome"><i></i></span></span>
          <span class="tk"><span class="ttl">ТТ<b>L</b></span></span>
          <span class="tk">
            <svg class="adobe" viewBox="0 0 29 29"><path d="M6 22c4-2 7-8 7-14 0-3 2-3 2 0 0 6 3 10 8 10 1 1 0 2-2 2-5-1-10 0-13 3-2 1-3 0-2-1z" fill="none" stroke="#fff" stroke-width="1"/></svg>
          </span>
          <span class="tk"><span class="emm">M</span></span>
        </span>
        <span class="tray">
          <span class="en">EN</span>
          <i class="tr-up"></i>
          <svg width="20" height="20" viewBox="0 0 20 20"><path d="M2 1v5M5 1v5M1 6h5v4H1z" fill="none" stroke="#2a3320"/><path d="M7 5h12v10H7z" fill="#4a5a3c" stroke="#eef2e6"/><path d="M10 15h6v2h-6zM8 17h10v1H8z" fill="#eef2e6"/></svg>
          <svg class="spk" width="20" height="20" viewBox="0 0 20 20"><path d="M2 7h4l5-5v16l-5-5H2z" fill="#eef2e6" stroke="#4a5a3c" stroke-width=".6"/><path d="M13 6c2 2 2 6 0 8M15.500 4c3 3 3 9 0 12" fill="none" stroke="#eef2e6" stroke-width="1.200"/></svg>
          <span class="clock">13:19<br />04-Aug-20</span>
          <span class="shd"></span>
        </span>
      </div>
    `;
  }
}
